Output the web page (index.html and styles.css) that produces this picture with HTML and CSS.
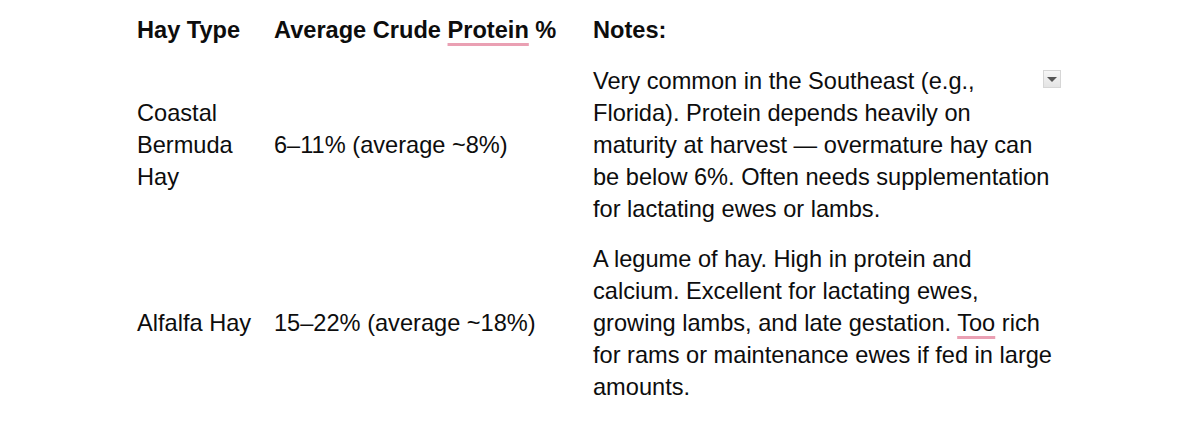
FILE: index.html
```html
<!DOCTYPE html>
<html lang="en">
<head>
<meta charset="utf-8">
<title>Hay Types</title>
<link rel="stylesheet" href="styles.css">
</head>
<body>
<div class="table">
  <div class="cell head">Hay Type</div>
  <div class="cell head">Average Crude <span class="spell">Protein</span> %</div>
  <div class="cell head">Notes:</div>

  <div class="cell row1">Coastal<br>Bermuda<br>Hay</div>
  <div class="cell row1">6–11% (average ~8%)</div>
  <div class="cell row1 notes">Very common in the Southeast (e.g., Florida). Protein depends heavily on maturity at harvest — overmature hay can be below 6%. Often needs supplementation for lactating ewes or lambs.<span class="dropdown"><span class="tri"></span></span></div>

  <div class="cell">Alfalfa Hay</div>
  <div class="cell">15–22% (average ~18%)</div>
  <div class="cell notes">A legume of hay. High in protein and calcium. Excellent for lactating ewes, growing lambs, and late gestation. <span class="spell">Too</span> rich for rams or maintenance ewes if fed in large amounts.</div>
</div>
</body>
</html>
```
FILE: styles.css
```css
html, body {
  margin: 0;
  padding: 0;
  background: #ffffff;
}
body {
  font-family: "Liberation Sans", Arial, Helvetica, sans-serif;
  font-size: 23.6px;
  line-height: 32px;
  color: #0d0d0d;
}
.table {
  display: grid;
  grid-template-columns: 117px 299px 466px;
  column-gap: 20px;
  align-items: center;
  margin: 5px 0 0 137px;
}
.cell {
  padding: 9px 0 8px 0;
}
.head {
  font-weight: bold;
  padding-bottom: 10px;
}
.row1 {
  padding-bottom: 9px;
}
.notes {
  position: relative;
}
.spell {
  text-decoration: underline;
  text-decoration-color: #eaa0b3;
  text-decoration-thickness: 3px;
  text-underline-offset: 5px;
}
.dropdown {
  position: absolute;
  top: 14px;
  right: -2px;
  width: 16px;
  height: 16px;
  border: 1px solid #d6d6d6;
  background: linear-gradient(#f6f6f6, #e4e4e4);
  display: flex;
  align-items: center;
  justify-content: center;
}
.tri {
  width: 0;
  height: 0;
  border-left: 5px solid transparent;
  border-right: 5px solid transparent;
  border-top: 5px solid #555555;
}
```
